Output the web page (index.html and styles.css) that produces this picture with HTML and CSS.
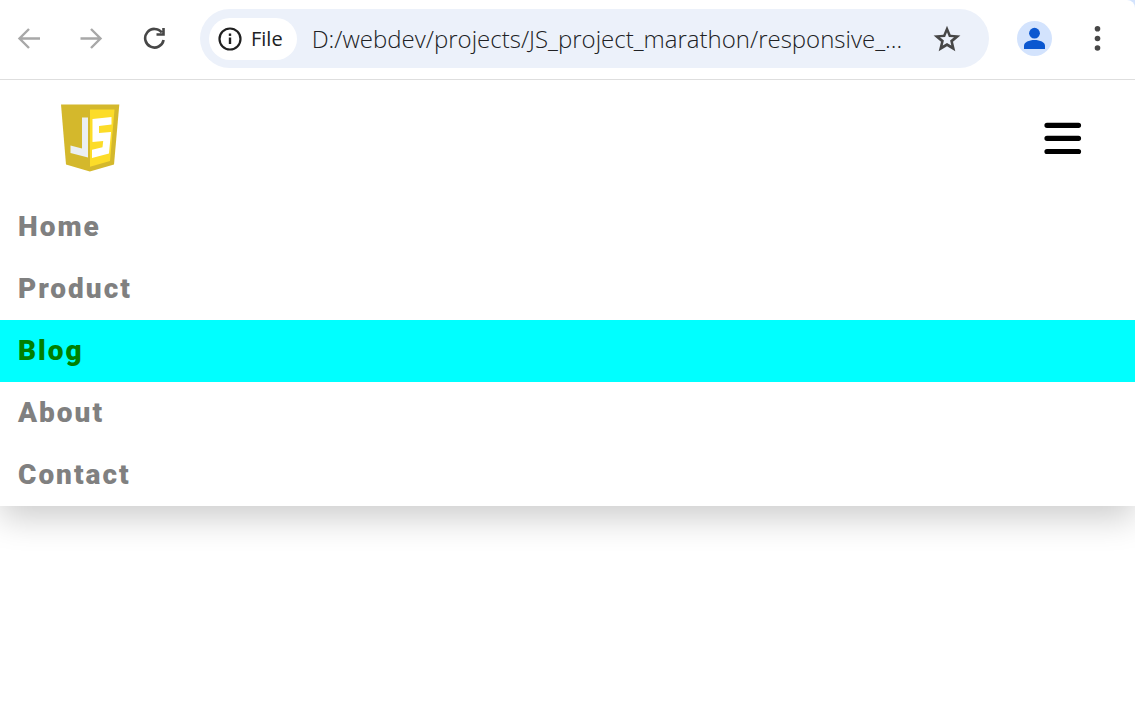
FILE: index.html
```html
<!DOCTYPE html>
<html lang="en">
<head>
<meta charset="utf-8">
<meta name="viewport" content="width=device-width, initial-scale=1">
<title>Responsive navbar</title>
<link rel="stylesheet" href="styles.css">
</head>
<body>
<div class="frame">
  <div class="toolbar">
    <button class="tool" type="button" aria-label="Back">
      <svg class="muted" width="24" height="24" viewBox="0 0 24 24"><path d="M23 11.500H3M12 2L2.500 11.500 12 21"/></svg>
    </button>
    <button class="tool" type="button" aria-label="Forward">
      <svg class="muted" width="24" height="24" viewBox="0 0 24 24"><path d="M.5 11.500h20M11 2l9.500 9.500L11 21"/></svg>
    </button>
    <button class="tool" type="button" aria-label="Reload">
      <svg class="dark" width="24" height="24" viewBox="0 0 24 24"><path d="M20.600 13A9.300 9.300 0 1 1 18.800 5.500M20.500 1v6.500H13.500"/></svg>
    </button>
    <div class="address">
      <button class="chip" type="button">
        <svg width="24" height="24" viewBox="0 0 24 24"><circle cx="12" cy="12" r="10.500" fill="none" stroke="#202020" stroke-width="2.200"/><path d="M12 10.500v6.500" stroke="#202020" stroke-width="2.400"/><rect x="10.800" y="6.500" width="2.400" height="2.400" fill="#202020"/></svg>
        File
      </button>
      <input class="url" type="text" aria-label="Address" value="D:/webdev/projects/JS_project_marathon/responsive_…">
      <button class="star" type="button" aria-label="Bookmark this page">
        <svg width="28" height="28" viewBox="0 0 28 28"><path fill="#474747" fill-rule="evenodd" d="M14 .8l3.700 8.900 9.700.8-7.400 6.300 2.300 9.500-8.300-5-8.300 5L8 16.800.6 10.500l9.700-.8zM14 7.200l-1.900 4.700-5.100.4 3.900 3.300-1.200 5 4.300-2.700 4.300 2.700-1.200-5 3.900-3.300-5.100-.4z"/></svg>
      </button>
    </div>
    <button class="profile" type="button" aria-label="Profile">
      <svg width="35" height="35" viewBox="0 0 35 35"><circle cx="17.500" cy="17.500" r="17.500" fill="#d3e3fd"/><circle cx="17.500" cy="12.200" r="5.400" fill="#0b57d0"/><path d="M7 28v-3.200c0-3.600 5-5.800 10.500-5.800S28 21.200 28 24.800V28z" fill="#0b57d0"/></svg>
    </button>
    <button class="tool" type="button" aria-label="Browser menu">
      <svg width="24" height="26" viewBox="0 0 24 26" fill="#474747"><circle cx="11.500" cy="2.800" r="2.800"/><circle cx="11.500" cy="12.500" r="2.800"/><circle cx="11.500" cy="22" r="2.800"/></svg>
    </button>
  </div>
</div>
<nav class="navbar">
  <div class="navbar-head">
    <a class="logo" href="#" aria-label="JavaScript">
      <svg width="60" height="68" viewBox="0 0 60 68">
        <path fill="#d4b82c" d="M1 .5h58.300L54 60.500 29.800 67.500 6 60.500z"/>
        <path fill="#fcdc28" d="M30 5.500h24.500L50 57 30 62.700z"/>
        <path fill="#ebeff2" d="M22 13.500h6v40L10.500 49v-7.500L22 44.500z"/>
        <path fill="#fff" d="M32.500 15L51.500 13v7.500L39 22v7l12-1L49 49.500 32 54v-8.300l10.500-2.500.7-6.200L32.500 38z"/>
      </svg>
    </a>
    <button class="burger" type="button" aria-label="Toggle navigation">
      <svg width="38" height="34" viewBox="0 0 38 34"><path d="M3 4.300h31.500M3 17.300h31.500M3 30.500h31.500" stroke="#000" stroke-width="5.200" stroke-linecap="round"/></svg>
    </button>
  </div>
  <ul class="menu">
    <li><a class="link" href="#">Home</a></li>
    <li><a class="link" href="#">Product</a></li>
    <li><a class="link active" href="#">Blog</a></li>
    <li><a class="link" href="#">About</a></li>
    <li><a class="link" href="#">Contact</a></li>
  </ul>
</nav>
</body>
</html>
```
FILE: styles.css
```css
* { box-sizing: border-box; }
body { margin: 0; min-height: 100vh; background: #fff; font-family: "Open Sans", "Noto Sans", sans-serif; }
button { margin: 0; padding: 0; border: 0; background: none; font: inherit; color: inherit; }
svg { display: block; }

.frame { position: relative; z-index: 2; background: #d3e3fd; }
.toolbar {
  display: flex;
  align-items: center;
  gap: 28px;
  height: 80px;
  padding: 0 25px 2px 17px;
  background: #fff;
  border-bottom: 1px solid #dedede;
  border-top-right-radius: 8px;
}
.tool { flex: none; width: 24px; display: flex; justify-content: center; }
.tool:nth-child(-n+2) { margin-right: 11px; }
.tool:nth-child(3) { margin-right: 5px; }
.tool svg path { fill: none; stroke-width: 2.4; }
.muted { stroke: #a8a8a8; }
.dark { stroke: #474747; }
.tool .dark path { stroke-width: 2.6; }

.address {
  flex: 1;
  min-width: 0;
  display: flex;
  align-items: center;
  height: 59px;
  padding: 0 28px 0 9px;
  border-radius: 30px;
  background: #ecf1fa;
  color: #202124;
}
.chip {
  flex: none;
  display: flex;
  align-items: center;
  gap: 9px;
  height: 42px;
  padding: 0 14px 0 9px;
  border-radius: 21px;
  background: #fff;
  font-size: 20px;
  font-weight: 500;
}
.url {
  flex: 1;
  min-width: 0;
  height: 42px;
  padding: 0;
  margin: 0 10px 0 15px;
  border: 0;
  background: none;
  color: inherit;
  font: 350 24px "Open Sans", "Noto Sans", sans-serif;
}
.star, .profile { flex: none; }
.profile { margin-right: 6px; }

.navbar { position: relative; z-index: 1; background: #fff; box-shadow: 0px 12px 32px 0px rgba(0, 0, 0, 0.2); }
.navbar-head {
  display: flex;
  align-items: center;
  justify-content: space-between;
  height: 116px;
  padding: 0 53px 0 60px;
}
.menu { list-style: none; margin: 0; padding: 0; }
.link {
  display: block;
  padding: 0 18px;
  color: #808080;
  font: 900 28px/62px Impact, Haettenschweiler, Roboto, sans-serif;
  letter-spacing: 2px;
  text-decoration: none;
}
.link.active { background: #0ff; color: #008000; }
```
